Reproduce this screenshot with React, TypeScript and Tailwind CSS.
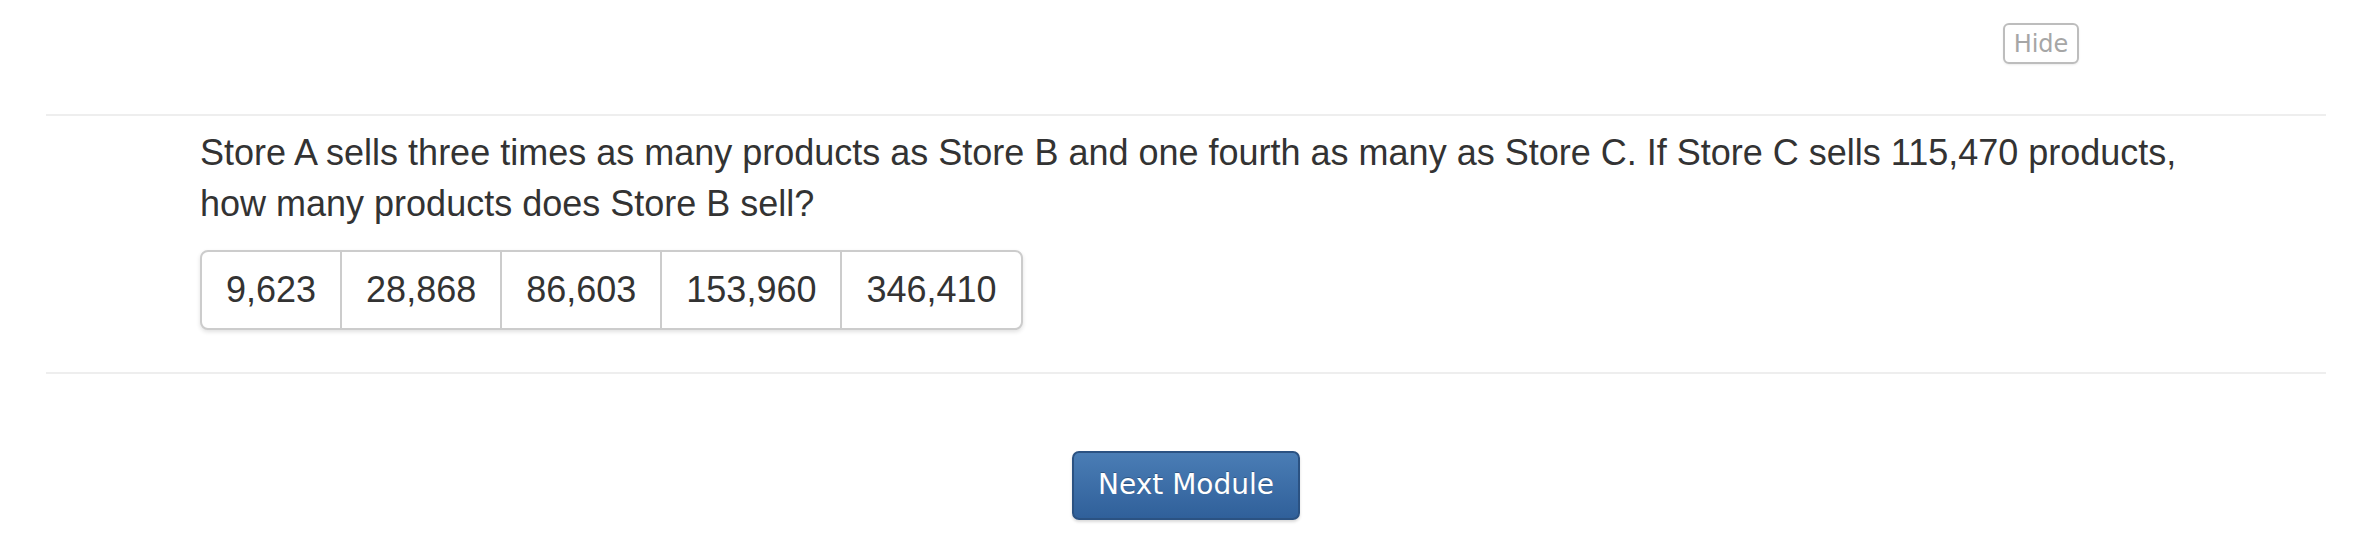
import React from "react";

const options = ["9,623", "28,868", "86,603", "153,960", "346,410"];

export default function App() {
  return (
    <div className="min-h-screen w-full bg-white pl-[46px] pr-[27px]">
      {/* top bar with hide button */}
      <div className="h-[114px] flex justify-end items-start pt-[23px] pr-[247px]">
        <button className="h-[41px] w-[76px] rounded-[6px] border-2 border-[#bdbdbd] bg-white text-[24px] leading-none text-[#a6a6a6] shadow-[0_1px_2px_rgba(0,0,0,0.08)] font-['DejaVu_Sans',sans-serif]">
          Hide
        </button>
      </div>

      <div className="h-[2px] bg-[#eeeeee]" />

      {/* question */}
      <div className="pl-[154px] pt-[11px] font-['Liberation_Sans',Arial,sans-serif] text-[#333333]">
        <p className="w-[2015px] text-[36px] leading-[51.4px]">
          Store A sells three times as many products as Store B and one fourth as many as Store C. If Store C sells 115,470 products, how many products does Store B sell?
        </p>

        <div className="mt-[20px] inline-flex rounded-[8px] border-2 border-[#cccccc] bg-white shadow-[0_2px_4px_rgba(0,0,0,0.12)]">
          {options.map((o, i) => (
            <div
              key={o}
              className={
                i < options.length - 1
                  ? "px-6 py-[12px] text-[36px] leading-[52px] border-r-2 border-[#cccccc]"
                  : "px-6 py-[12px] text-[36px] leading-[52px]"
              }
            >
              {o}
            </div>
          ))}
        </div>
      </div>

      <div className="mt-[42px] h-[2px] bg-[#eeeeee]" />

      {/* next module */}
      <div className="flex justify-center pt-[77px]">
        <button className="h-[69px] w-[228px] rounded-[7px] border-2 border-[#2b5282] bg-gradient-to-b from-[#4a7db5] to-[#30609a] text-white text-[28px] font-['DejaVu_Sans',sans-serif] shadow-[0_2px_3px_rgba(0,0,0,0.15)] [text-shadow:0_-1px_0_rgba(0,0,0,0.25)]">
          Next Module
        </button>
      </div>
    </div>
  );
}
